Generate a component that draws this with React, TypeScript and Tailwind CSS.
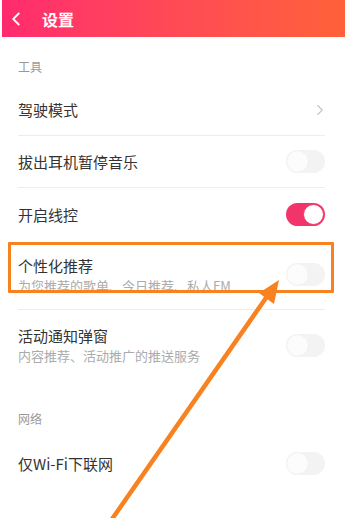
import { ChevronLeft, ChevronRight } from 'lucide-react';

function Toggle({ on = false }: { on?: boolean }) {
  return on ? (
    <div className="w-[39px] h-[23px] rounded-full bg-[#f2346b] flex items-center justify-end pr-[1px]">
      <div className="w-[21px] h-[21px] rounded-full bg-white border border-[#f2346b]" />
    </div>
  ) : (
    <div className="w-[39px] h-[23px] rounded-full bg-[#f3f3f3] flex items-center pl-[1px]">
      <div className="w-[21px] h-[21px] rounded-full bg-[#fcfcfc] shadow-[0_0_1px_rgba(0,0,0,0.06)]" />
    </div>
  );
}

function Row({
  title,
  sub,
  right,
  divider = true,
  tall = false,
}: {
  title: string;
  sub?: string;
  right: React.ReactNode;
  divider?: boolean;
  tall?: boolean;
}) {
  return (
    <div className={`ml-[18px] mr-[20px] flex items-center justify-between ${tall ? 'h-[70px]' : 'h-[52px]'} ${divider ? 'border-b border-[#ededed]' : ''}`}>
      <div className="flex flex-col">
        <span className="text-[15px] leading-[21px] text-[#333]">{title}</span>
        {sub && <span className="text-[13px] leading-[18px] text-[#ababab] mt-[1px]">{sub}</span>}
      </div>
      {right}
    </div>
  );
}

export default function App() {
  return (
    <div
      className="relative w-[345px] h-[518px] bg-white overflow-hidden"
      style={{ fontFamily: '"Noto Sans CJK SC", "Noto Sans", sans-serif' }}
    >
      <header className="ml-[2px] h-[37px] bg-gradient-to-r from-[#ff2a6e] via-[#ff4a55] to-[#ff6139] flex items-center text-white">
        <ChevronLeft className="w-[22px] h-[22px] ml-[3px]" strokeWidth={2} />
        <h1 className="ml-[15px] text-[16px] font-bold">设置</h1>
      </header>

      <div className="h-[47px] flex items-end pb-[9px] pl-[18px] text-[12px] leading-[17px] text-[#9a9a9a]">工具</div>
      <Row title="驾驶模式" right={<ChevronRight className="w-[18px] h-[18px] text-[#c4c4c4] mr-[-4px]" strokeWidth={1.5} />} />
      <Row title="拔出耳机暂停音乐" right={<Toggle />} />
      <Row title="开启线控" right={<Toggle on />} divider={false} />
      <Row title="个性化推荐" sub="为您推荐的歌单、今日推荐、私人FM" right={<Toggle />} tall />
      <Row title="活动通知弹窗" sub="内容推荐、活动推广的推送服务" right={<Toggle />} divider={false} tall />

      <div className="h-[57px] flex items-end pb-[10px] pl-[18px] text-[12px] leading-[17px] text-[#9a9a9a]">网络</div>
      <Row title="仅Wi-Fi下联网" right={<Toggle />} divider={false} />

      <div className="absolute left-[8px] top-[242px] w-[326px] h-[51px] border-[3px] border-[#f7821f] rounded-[1px]" />

      <svg className="absolute inset-0 pointer-events-none" width="345" height="518" viewBox="0 0 345 518">
        <line x1="110" y1="522" x2="268" y2="295" stroke="#f7821f" strokeWidth="4.5" />
        <polygon points="279,280 259,293 274,304" fill="#f7821f" />
      </svg>
    </div>
  );
}
